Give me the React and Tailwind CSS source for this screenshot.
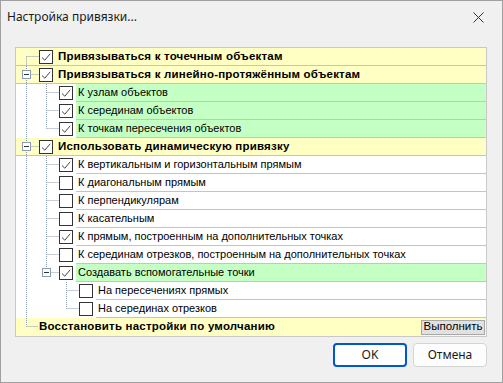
import React from "react";

const rows = [
  { t: "Привязываться к точечным объектам", lvl: 1, on: true },
  { t: "Привязываться к линейно-протяжённым объектам", lvl: 1, on: true, toggle: true },
  { t: "К узлам объектов", lvl: 2, on: true, green: true },
  { t: "К серединам объектов", lvl: 2, on: true, green: true },
  { t: "К точкам пересечения объектов", lvl: 2, on: true, green: true },
  { t: "Использовать динамическую привязку", lvl: 1, on: true, toggle: true },
  { t: "К вертикальным и горизонтальным прямым", lvl: 2, on: true },
  { t: "К диагональным прямым", lvl: 2, on: false },
  { t: "К перпендикулярам", lvl: 2, on: false },
  { t: "К касательным", lvl: 2, on: false },
  { t: "К прямым, построенным на дополнительных точках", lvl: 2, on: true },
  { t: "К серединам отрезков, построенным на дополнительных точках", lvl: 2, on: false },
  { t: "Создавать вспомогательные точки", lvl: 2, on: true, green: true, toggle: true },
  { t: "На пересечениях прямых", lvl: 3, on: false },
  { t: "На серединах отрезков", lvl: 3, on: false },
  { t: "Восстановить настройки по умолчанию", lvl: 1, action: true },
];

const LINE = "#8c9cb0";
const C = 8.5;

// vertical tree guides for row i: [x, y1, y2]
function guides(i) {
  const v = [];
  if (i === 0) v.push([10.5, C, 18]);
  else if (i === 15) v.push([10.5, 0, C]);
  else v.push([10.5, 0, 18]);
  if (i === 2 || i === 3 || (i >= 6 && i <= 11)) v.push([30.5, 0, 18]);
  if (i === 4 || i === 12) v.push([30.5, 0, C]);
  if (i === 13) v.push([50.5, 0, 18]);
  if (i === 14) v.push([50.5, 0, C]);
  return v;
}

function Gutter({ i, row }) {
  const x0 = row.lvl === 1 ? 10.5 : row.lvl === 2 ? 30.5 : 50.5;
  const w = row.action ? 22 : row.lvl === 1 ? 23 : row.lvl === 2 ? 43 : 63;
  const tx = row.lvl === 1 ? 10.5 : 30.5;
  return (
    <svg width={w} height={18} className="shrink-0 self-start overflow-visible">
      {guides(i).map(([x, a, b], k) => (
        <line key={k} x1={x} y1={a} x2={x} y2={b} stroke={LINE} strokeDasharray="1 1" />
      ))}
      <line x1={x0} y1={C} x2={w} y2={C} stroke={LINE} strokeDasharray="1 1" />
      {row.toggle && (
        <g>
          <rect x={tx - 4} y={4.5} width={8} height={8} fill="#fff" stroke="#8c9cb0" />
          <line x1={tx - 2.5} y1={C} x2={tx + 2.5} y2={C} stroke="#333" />
        </g>
      )}
    </svg>
  );
}

function Check({ on }) {
  return (
    <div className="w-[14px] h-[14px] shrink-0 border border-[#333] bg-white flex items-center justify-center">
      {on && (
        <svg width="12" height="12" viewBox="0 0 12 12">
          <path d="M2 6.5 L4.8 9.2 L10.2 2.8" fill="none" stroke="#444" strokeWidth="1" />
        </svg>
      )}
    </div>
  );
}

function Row({ row, i, last }) {
  const text =
    row.lvl === 1 ? (
      <span className="whitespace-nowrap text-[11.5px] font-bold text-black tracking-[0.2px]">
        {row.t}
      </span>
    ) : (
      <span className="whitespace-nowrap text-[11px] text-black">{row.t}</span>
    );

  if (row.lvl === 1) {
    return (
      <div
        className={`flex items-center h-[18px] bg-[#ffffc4] ${last ? "" : "border-b border-[#c4c4c4]"}`}
      >
        <Gutter i={i} row={row} />
        {!row.action && <Check on={row.on} />}
        <div className={`flex-1 flex items-center ${row.action ? "pl-[1px]" : "ml-[3px] pl-[2px]"}`}>
          {text}
        </div>
        {row.action && (
          <button className="mr-[1px] h-[15px] w-[64px] bg-[#e1e1e1] border border-[#a8a8a8] text-[11.5px] leading-none text-black flex items-center justify-center">
            Выполнить
          </button>
        )}
      </div>
    );
  }

  return (
    <div className="flex items-start h-[18px]">
      <Gutter i={i} row={row} />
      <div className="h-[17px] flex items-center">
        <Check on={row.on} />
      </div>
      <div
        className={`ml-[3px] pl-[2px] flex-1 h-[18px] flex items-center border-b border-[#c4c4c4] ${row.green ? "bg-[#c4ffc4]" : "bg-white"}`}
      >
        {text}
      </div>
    </div>
  );
}

export default function App() {
  return (
    <div
      className="w-[503px] h-[383px] bg-[#f0f0f0] border border-[#a0a0a0] flex flex-col"
      style={{ fontFamily: '"Liberation Sans", Arial, sans-serif' }}
    >
      <div className="h-[32px] flex items-center justify-between pl-[6px] pr-[18px]">
        <span className="text-[12px] text-[#1a1a1a] font-['Noto_Sans',sans-serif]">
          Настройка привязки...
        </span>
        <svg width="11" height="11" viewBox="0 0 11 11">
          <path d="M0.5 0.5 L10.5 10.5 M10.5 0.5 L0.5 10.5" stroke="#333" strokeWidth="1" />
        </svg>
      </div>

      <div className="ml-[14px] mt-[14px] w-[472px] border border-[#c8c8c8] bg-white flex flex-col">
        {rows.map((row, i) => (
          <Row key={i} row={row} i={i} last={i === rows.length - 1} />
        ))}
      </div>

      <div className="flex justify-end gap-[6px] pr-[15px] mt-[6px]">
        <button className="w-[74px] h-[24px] rounded-[4px] border-2 border-[#0058d0] bg-white text-[12px] text-[#1a1a1a] font-['Noto_Sans',sans-serif]">
          OK
        </button>
        <button className="w-[74px] h-[24px] rounded-[4px] border border-[#d4d4d4] bg-[#fdfdfd] text-[12px] text-[#1a1a1a] font-['Noto_Sans',sans-serif]">
          Отмена
        </button>
      </div>
    </div>
  );
}
